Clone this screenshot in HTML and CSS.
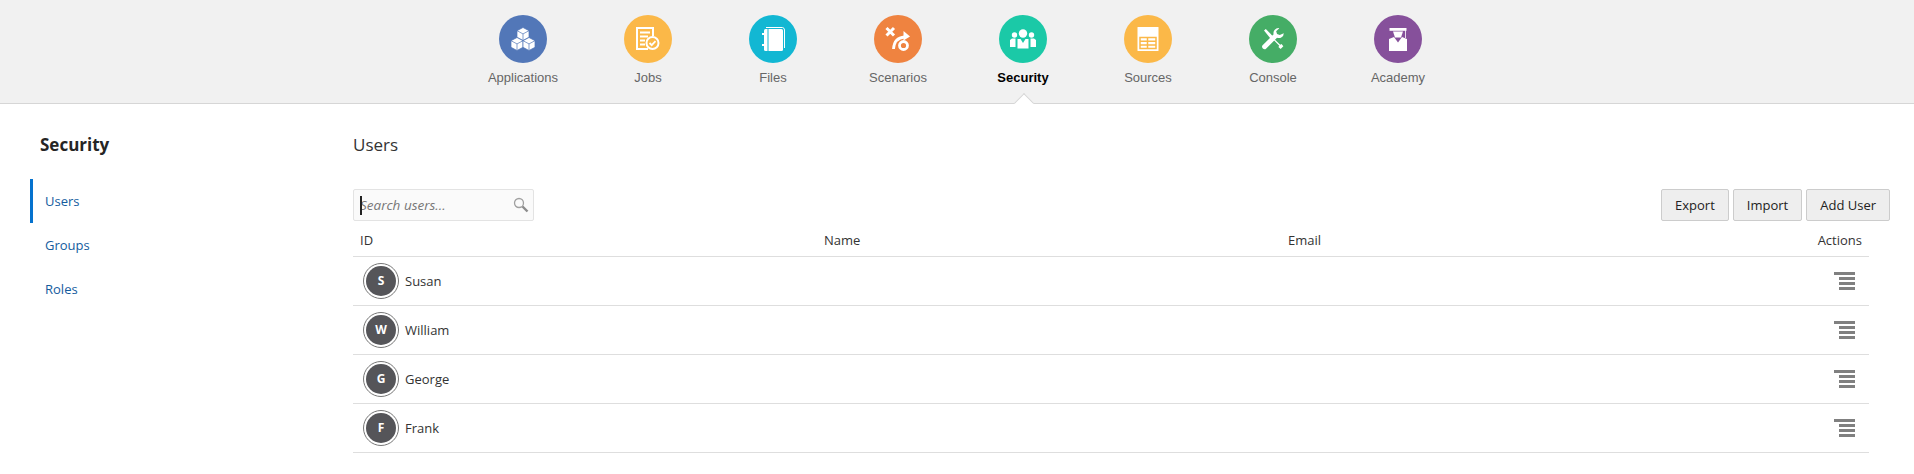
FILE: index.html
```html
<!DOCTYPE html>
<html lang="en">
<head>
  <meta charset="UTF-8">
  <meta name="viewport" content="width=device-width, initial-scale=1.0">
  <title>Security - Users</title>
  <link rel="stylesheet" href="styles.css">
</head>
<body>

  <header class="top-nav">
    <a class="nav-item">
      <span class="nav-circle c-blue">
        <svg viewBox="0 0 48 48" class="nav-icon">
          <g fill="#fff" stroke="#5277b8" stroke-width=".7">
            <path d="M24 12.5l6 3.2v6.6l-6 3.2-6-3.2v-6.600z"/>
            <path d="M18 22.5l6 3.2v6.6l-6 3.2-6-3.2v-6.600z"/>
            <path d="M30 22.5l6 3.2v6.6l-6 3.2-6-3.2v-6.600z"/>
            <path d="M18 15.7l6 3.2 6-3.2M24 19v6.5M12 25.7l6 3.2 6-3.2M18 29v6.5M24 25.7l6 3.2 6-3.2M30 29v6.5" fill="none"/>
          </g>
        </svg>
      </span>
      <span class="nav-label">Applications</span>
    </a>
    <a class="nav-item">
      <span class="nav-circle c-amber">
        <svg viewBox="0 0 48 48" class="nav-icon">
          <path d="M29 21v-8H13v21h11" fill="none" stroke="#fff" stroke-width="2"/>
          <path d="M16 17.500h10M16 21.500h8M16 25.500h5M16 29.500h5" stroke="#fff" stroke-width="1.800"/>
          <circle cx="28.500" cy="28" r="6" fill="none" stroke="#fff" stroke-width="2"/>
          <path d="M25.500 28l2.200 2.200 3.800-4" fill="none" stroke="#fff" stroke-width="1.800"/>
        </svg>
      </span>
      <span class="nav-label">Jobs</span>
    </a>
    <a class="nav-item">
      <span class="nav-circle c-teal">
        <svg viewBox="0 0 48 48" class="nav-icon">
          <path d="M17 12.500h16.500a2.500 2.500 0 0 1 2 2.500v18" fill="none" stroke="#fff" stroke-width="1"/>
          <rect x="15" y="14" width="19" height="22" rx="1.500" fill="#fff"/>
          <path d="M19 14v22" stroke="#12b7d3" stroke-width="1"/>
          <path d="M13 19h5M13 30h5" stroke="#fff" stroke-width="2"/>
        </svg>
      </span>
      <span class="nav-label">Files</span>
    </a>
    <a class="nav-item">
      <span class="nav-circle c-orange">
        <svg viewBox="0 0 48 48" class="nav-icon">
          <path d="M12.500 13l7.500 7.500M20 13l-7.500 7.500" stroke="#fff" stroke-width="3"/>
          <circle cx="29.500" cy="30.500" r="4" fill="none" stroke="#fff" stroke-width="2.800"/>
          <path d="M19.500 34c.5-7 4.500-11.500 11-12" fill="none" stroke="#fff" stroke-width="2.800"/>
          <path d="M29.500 16l6.500 5.500-6.500 4z" fill="#fff"/>
        </svg>
      </span>
      <span class="nav-label">Scenarios</span>
    </a>
    <a class="nav-item active">
      <span class="nav-circle c-green">
        <svg viewBox="0 0 48 48" class="nav-icon">
          <g fill="#fff">
            <circle cx="24" cy="18.500" r="4.200"/>
            <circle cx="15.500" cy="20" r="2.700"/>
            <circle cx="32.500" cy="20" r="2.700"/>
            <path d="M18.500 24h3l2.500 4 2.500-4h3v9.500h-11z"/>
            <path d="M11 25l2-1.500h3.500v8.500h-5.500zM37 25l-2-1.500h-3.500v8.500h5.500z"/>
          </g>
        </svg>
      </span>
      <span class="nav-label">Security</span>
    </a>
    <a class="nav-item">
      <span class="nav-circle c-amber">
        <svg viewBox="0 0 48 48" class="nav-icon">
          <rect x="13.500" y="12" width="21" height="24" rx=".5" fill="#fff"/>
          <path d="M16 22.500h16v11h-16zM16 26.200h16M16 29.900h16M23.500 22.500v11" fill="none" stroke="#fbb848" stroke-width="1.500"/>
        </svg>
      </span>
      <span class="nav-label">Sources</span>
    </a>
    <a class="nav-item">
      <span class="nav-circle c-lime">
        <svg viewBox="0 0 48 48" class="nav-icon">
          <g fill="#fff" transform="translate(2.400 2.400) scale(.9)">
            <path d="M14 14.500l2-1.500 7 7 3 4.500 6 6 1.500-1 2 2.500-3 3-2.500-2 1-1.500-6-6-4.500-3z"/>
            <path d="M36 17.500a5.500 5.500 0 0 1-7.500 5l-12 12a2.500 2.500 0 0 1-3.800-3.700l12-12a5.500 5.500 0 0 1 6.300-6.800l-3.500 3.500 1 3 3 1z"/>
          </g>
        </svg>
      </span>
      <span class="nav-label">Console</span>
    </a>
    <a class="nav-item">
      <span class="nav-circle c-purple">
        <svg viewBox="0 0 48 48" class="nav-icon">
          <g fill="#fff">
            <path d="M15.500 13h17v2.800h-17z"/>
            <path d="M31.200 15h.8v8h-.8z"/>
            <path d="M19 16.500h10l-2 6h-6z"/>
            <path d="M15 24l5-2 4 5.500 4-5.500 5 2v12h-18z"/>
          </g>
        </svg>
      </span>
      <span class="nav-label">Academy</span>
    </a>
  </header>

  <div class="page">
    <aside class="sidebar">
      <h2 class="sidebar-title">Security</h2>
      <ul class="side-menu">
        <li class="side-link selected">Users</li>
        <li class="side-link">Groups</li>
        <li class="side-link">Roles</li>
      </ul>
    </aside>

    <main class="content">
      <h2 class="content-title">Users</h2>

      <div class="toolbar">
        <div class="search-box">
          <span class="caret"></span>
          <input type="text" class="search-input" placeholder="Search users...">
          <svg class="search-icon" viewBox="0 0 16 16">
            <circle cx="6" cy="6" r="4.500" fill="none" stroke="#a0a0a0" stroke-width="1.300"/>
            <path d="M9.500 9.500l5 5" stroke="#8c8c8c" stroke-width="2.400"/>
          </svg>
        </div>
        <div class="buttons">
          <button class="btn">Export</button>
          <button class="btn">Import</button>
          <button class="btn">Add User</button>
        </div>
      </div>

      <table class="users">
        <thead>
          <tr>
            <th class="col-id">ID</th>
            <th class="col-name">Name</th>
            <th>Email</th>
            <th class="col-actions">Actions</th>
          </tr>
        </thead>
        <tbody>
          <tr>
            <td><div class="user"><span class="avatar"><span>S</span></span>Susan</div></td>
            <td></td>
            <td></td>
            <td class="col-actions"><span class="menu-icon"><i></i><i></i><i></i><i></i></span></td>
          </tr>
          <tr>
            <td><div class="user"><span class="avatar"><span>W</span></span>William</div></td>
            <td></td>
            <td></td>
            <td class="col-actions"><span class="menu-icon"><i></i><i></i><i></i><i></i></span></td>
          </tr>
          <tr>
            <td><div class="user"><span class="avatar"><span>G</span></span>George</div></td>
            <td></td>
            <td></td>
            <td class="col-actions"><span class="menu-icon"><i></i><i></i><i></i><i></i></span></td>
          </tr>
          <tr>
            <td><div class="user"><span class="avatar"><span>F</span></span>Frank</div></td>
            <td></td>
            <td></td>
            <td class="col-actions"><span class="menu-icon"><i></i><i></i><i></i><i></i></span></td>
          </tr>
        </tbody>
      </table>
    </main>
  </div>

</body>
</html>
```

FILE: styles.css
```css
* {
  box-sizing: border-box;
}

body {
  margin: 0;
  background-color: white;
  font-family: "Open Sans", sans-serif;
  font-size: 13px;
  color: #333;
}

.top-nav {
  display: flex;
  justify-content: center;
  height: 104px;
  padding: 15px 0 0 7px;
  background-color: #f1f1f1;
  border-bottom: 1px solid #d6d6d6;
}

.nav-item {
  position: relative;
  width: 125px;
  display: flex;
  flex-direction: column;
  align-items: center;
}

.nav-circle {
  width: 48px;
  height: 48px;
  border-radius: 50%;
}

.nav-icon {
  display: block;
  width: 48px;
  height: 48px;
}

.c-blue { background-color: #5277b8; }
.c-amber { background-color: #fbb848; }
.c-teal { background-color: #12b7d3; }
.c-orange { background-color: #ef8340; }
.c-green { background-color: #1bc9a7; }
.c-lime { background-color: #45ad66; }
.c-purple { background-color: #86509b; }

.nav-label {
  margin-top: 7px;
  font-family: "Liberation Sans", Arial, sans-serif;
  font-size: 13px;
  line-height: 16px;
  color: #666;
}

.nav-item.active .nav-label {
  font-weight: bold;
  color: #000;
}

.nav-item.active::after {
  content: "";
  position: absolute;
  left: 50%;
  bottom: -7px;
  width: 13px;
  height: 13px;
  margin-left: -6px;
  background-color: white;
  border-top: 1px solid #d6d6d6;
  border-left: 1px solid #d6d6d6;
  transform: rotate(45deg);
}

.page {
  display: grid;
  grid-template-columns: 353px 1fr;
  padding: 29px 24px 0 0;
}

.sidebar {
  padding-left: 30px;
}

.sidebar-title {
  margin: 0 0 22px 10px;
  font-size: 17px;
  line-height: 24px;
  font-weight: 700;
  color: #252525;
}

.side-menu {
  list-style: none;
  margin: 0;
  padding: 0;
}

.side-link {
  height: 44px;
  line-height: 44px;
  padding-left: 12px;
  border-left: 3px solid transparent;
  color: #145c9e;
}

.side-link.selected {
  border-left-color: #0572ce;
}

.content-title {
  margin: 0 0 32px;
  font-size: 17px;
  line-height: 24px;
  font-weight: 400;
  color: #333;
}

.toolbar {
  display: flex;
  justify-content: space-between;
}

.search-box {
  position: relative;
  display: flex;
  align-items: center;
  width: 181px;
  height: 32px;
  background-color: #fafafa;
  border: 1px solid #e3e3e3;
  border-radius: 2px;
}

.search-input {
  flex: 1;
  min-width: 0;
  height: 100%;
  padding: 0 0 0 6px;
  border: none;
  background: transparent;
  font-family: "Open Sans", sans-serif;
  font-size: 13.5px;
  font-style: italic;
}

.search-input::placeholder {
  color: #777;
  opacity: 1;
}

.caret {
  position: absolute;
  left: 6px;
  top: 6px;
  width: 2px;
  height: 19px;
  background-color: #222;
}

.search-icon {
  width: 16px;
  height: 16px;
  margin-right: 4px;
  flex-shrink: 0;
}

.buttons {
  display: flex;
  gap: 4px;
}

.btn {
  height: 32px;
  padding: 0 13px;
  background-color: #eee;
  border: 1px solid #ccc;
  border-radius: 2px;
  font-family: "Open Sans", sans-serif;
  font-size: 13px;
  color: #222;
}

.users {
  width: 1516px;
  table-layout: fixed;
  border-collapse: collapse;
}

.users th {
  height: 35px;
  padding: 3px 7px 0;
  text-align: left;
  font-weight: 400;
  color: #333;
  border-bottom: 1px solid #dedede;
}

.users .col-id,
.users .col-name {
  width: 464px;
}

.users td {
  height: 49px;
  padding: 0 7px;
  border-bottom: 1px solid #dedede;
}

.users .col-actions {
  text-align: right;
}

.user {
  display: flex;
  align-items: center;
  gap: 6px;
  padding-left: 3px;
}

.avatar {
  display: flex;
  width: 36px;
  height: 36px;
  padding: 2px;
  border: 1px solid #777;
  border-radius: 50%;
}

.avatar span {
  flex: 1;
  border-radius: 50%;
  background-color: #555559;
  color: white;
  font-size: 12px;
  font-weight: 700;
  line-height: 30px;
  text-align: center;
}

.menu-icon {
  display: inline-flex;
  flex-direction: column;
  align-items: flex-end;
  gap: 2px;
  margin-right: 7px;
  vertical-align: middle;
}

.menu-icon i {
  display: block;
  width: 16px;
  height: 3px;
  background-color: #808080;
}

.menu-icon i:first-child {
  width: 21px;
}
```
